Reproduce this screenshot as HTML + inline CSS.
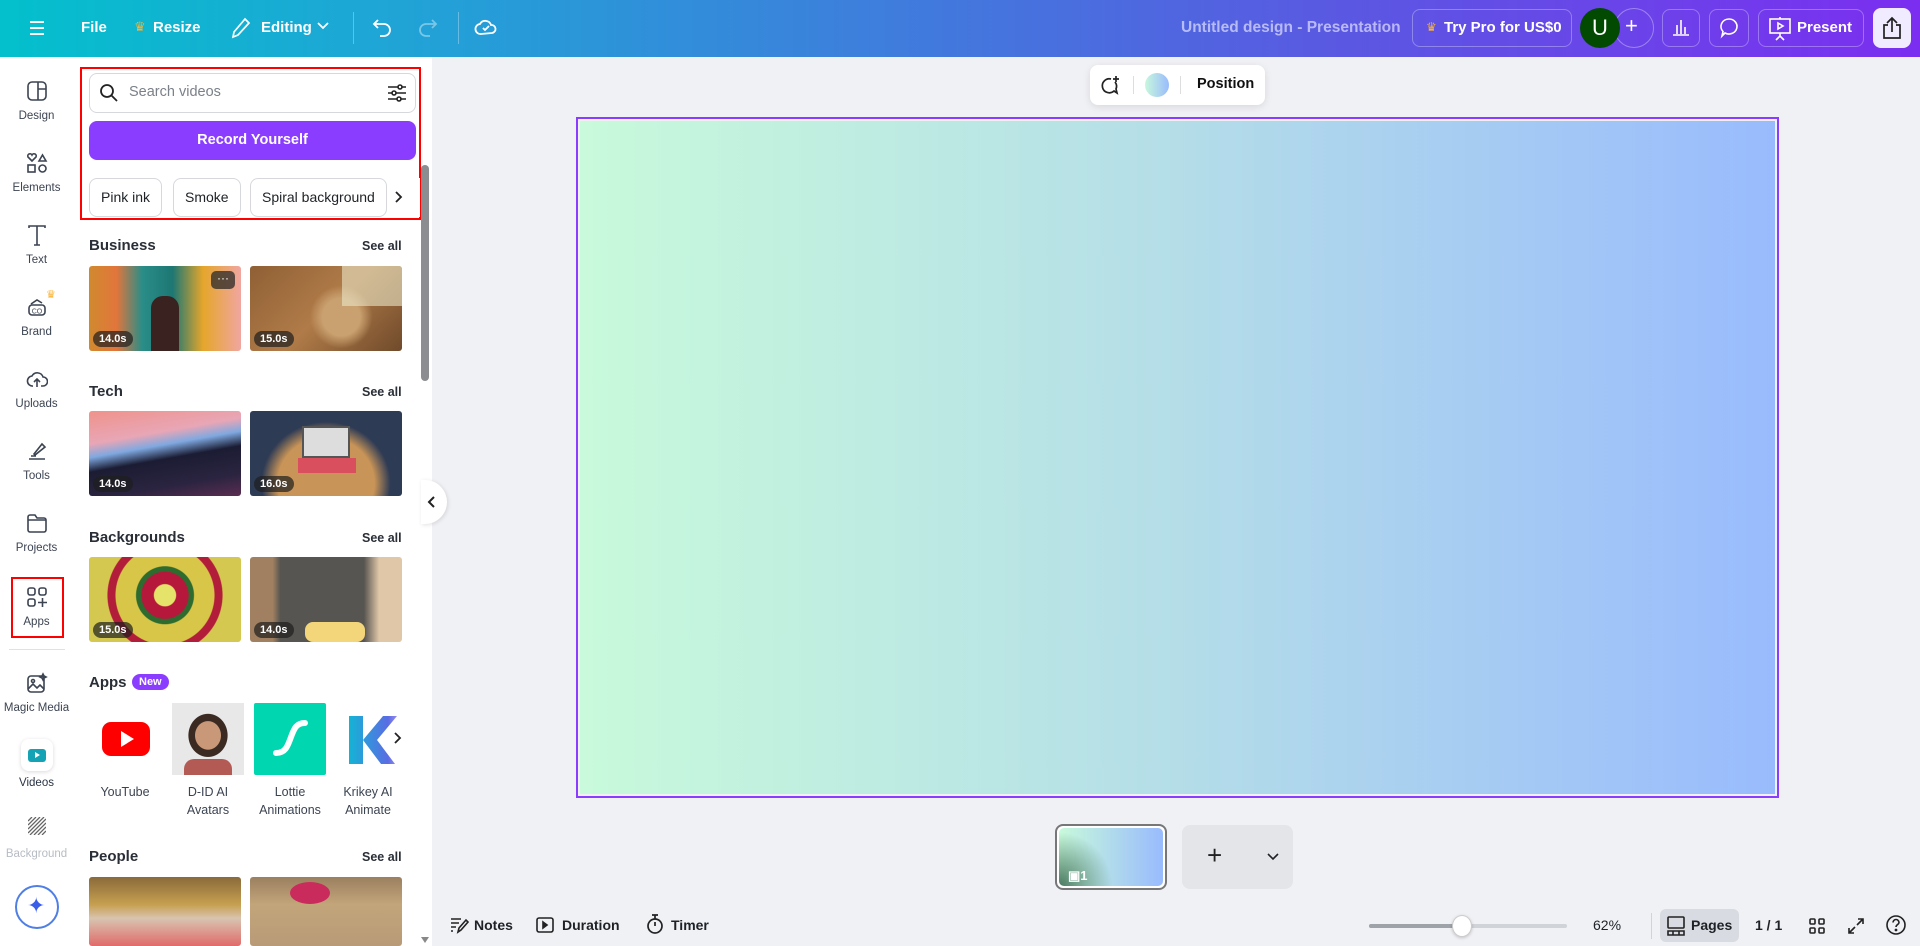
<!DOCTYPE html>
<html><head><meta charset="utf-8"><style>
*{box-sizing:border-box;margin:0;padding:0}
body{width:1920px;height:946px;overflow:hidden;font-family:"Liberation Sans",sans-serif;background:#f0f1f5;position:relative;color:#0d1216}
.a{position:absolute}
.hdr{left:0;top:0;width:1920px;height:57px;background:linear-gradient(90deg,#03c0cc 0%,#1fa5d6 20%,#3d7fdc 45%,#5a58e2 70%,#7b2ef0 100%)}
.ht{color:#fff;font-weight:bold;font-size:15px;top:19px}
.hb{border:1px solid rgba(255,255,255,.3);border-radius:8px;height:38px;top:9px}
.rail{left:0;top:57px;width:73px;height:889px;background:#fff}
.ri{width:73px;text-align:center;font-size:11.5px;color:#3c4452}
.ri svg{display:block;margin:0 auto 8px}
.panel{left:73px;top:57px;width:359px;height:889px;background:#fff}
.h3{font-weight:bold;font-size:15px;color:#2a2f37}
.sa{font-size:12.5px;font-weight:bold;color:#2a2f37}
.th{width:152px;height:85px;border-radius:3px;overflow:hidden}
.dur{position:absolute;left:4px;bottom:4px;background:rgba(30,30,30,.7);color:#fff;font-size:11px;font-weight:bold;padding:2px 6px;border-radius:9px}
.chip{top:178px;height:39px;border:1px solid #d6d8dc;border-radius:8px;font-size:14px;line-height:37px;padding:0 11px;color:#202428;background:#fff}
.al{font-size:12.5px;color:#3c4452;text-align:center;width:80px;line-height:18px}
.bt{top:917px;font-size:14px;font-weight:bold;color:#1e2226}
</style></head><body>
<div class="a hdr"></div>
<svg class="a" style="left:28px;top:19px" width="18" height="18" viewBox="0 0 18 18" stroke="#fff" stroke-width="2"><path d="M2 3h14M2 9h14M2 15h14"/></svg>
<div class="a ht" style="left:81px">File</div>
<div class="a" style="left:134px;top:19px;color:#f9b233;font-size:13px">♛</div>
<div class="a ht" style="left:153px">Resize</div>
<svg class="a" style="left:231px;top:17px" width="20" height="22" viewBox="0 0 20 22" fill="none" stroke="#fff" stroke-width="1.7"><path d="M14 2l4 4L7 18l-5 2 1-5z"/></svg>
<div class="a ht" style="left:261px">Editing</div>
<svg class="a" style="left:317px;top:22px" width="12" height="8" viewBox="0 0 12 8" fill="none" stroke="#fff" stroke-width="1.7"><path d="M1 1l5 5 5-5"/></svg>
<div class="a" style="left:353px;top:12px;width:1px;height:32px;background:rgba(255,255,255,.3)"></div>
<svg class="a" style="left:372px;top:17px" width="22" height="22" viewBox="0 0 22 22" fill="none" stroke="#fff" stroke-width="1.8"><path d="M6 3L2 7l4 4M2 7h10a6 6 0 010 12H8"/></svg>
<svg class="a" style="left:416px;top:17px" width="22" height="22" viewBox="0 0 22 22" fill="none" stroke="rgba(255,255,255,.4)" stroke-width="1.8"><path d="M16 3l4 4-4 4M20 7H10a6 6 0 000 12h4"/></svg>
<div class="a" style="left:458px;top:12px;width:1px;height:32px;background:rgba(255,255,255,.3)"></div>
<svg class="a" style="left:474px;top:15px" width="24" height="24" viewBox="0 0 24 24" fill="none" stroke="#fff" stroke-width="1.8"><path d="M7 19a5 5 0 01-1-10 6 6 0 0111 1 4 4 0 011 8z"/><path d="M9 13l2 2 4-4"/></svg>
<div class="a" style="left:1181px;top:19px;color:rgba(225,225,255,.7);font-size:15.5px;font-weight:bold">Untitled design - Presentation</div>
<div class="a hb" style="left:1412px;width:160px"></div>
<div class="a" style="left:1426px;top:20px;color:#f9b233;font-size:12px">♛</div>
<div class="a ht" style="left:1444px">Try Pro for US$0</div>
<div class="a" style="left:1614px;top:8px;width:40px;height:40px;border-radius:50%;border:1px solid rgba(255,255,255,.35)"></div>
<div class="a" style="left:1625px;top:13px;color:#fff;font-size:22px">+</div>
<div class="a" style="left:1580px;top:8px;width:40px;height:40px;border-radius:50%;background:#024902;color:#fff;font-size:22px;text-align:center;line-height:40px">U</div>
<div class="a hb" style="left:1662px;width:38px"></div>
<svg class="a" style="left:1671px;top:17px" width="20" height="20" viewBox="0 0 20 20" stroke="#fff" stroke-width="1.6"><path d="M2 18h16M6 17V8M10 17V3M14 17V10"/></svg>
<div class="a hb" style="left:1709px;width:40px"></div>
<svg class="a" style="left:1718px;top:16px" width="22" height="24" viewBox="0 0 22 24" fill="none" stroke="#fff" stroke-width="1.6"><path d="M11 3a8 7.5 0 11-4 14l-3 3 1-4.5A8 7.5 0 0111 3z"/></svg>
<div class="a hb" style="left:1758px;width:106px"></div>
<svg class="a" style="left:1768px;top:16px" width="24" height="26" viewBox="0 0 24 26" fill="none" stroke="#fff" stroke-width="1.6"><rect x="2" y="3" width="20" height="14"/><path d="M10 7l5 3-5 3zM12 17v3M8 24l4-4 4 4M12 1v2"/></svg>
<div class="a ht" style="left:1797px">Present</div>
<div class="a" style="left:1873px;top:8px;width:38px;height:40px;border-radius:8px;background:#f1ebff"></div>
<svg class="a" style="left:1881px;top:16px" width="22" height="24" viewBox="0 0 22 24" fill="none" stroke="#222" stroke-width="1.7"><path d="M7 9H3v13h16V9h-4M11 16V2M6 7l5-5 5 5"/></svg>

<div class="a rail"></div>
<div class="a ri" style="left:0;top:80px"><svg width="22" height="22" viewBox="0 0 22 22" fill="none" stroke="#3c4452" stroke-width="1.6"><rect x="2" y="2" width="18" height="18" rx="4"/><path d="M12 2v18M12 9h8"/></svg>Design</div>
<div class="a ri" style="left:0;top:152px"><svg width="22" height="22" viewBox="0 0 22 22" fill="none" stroke="#3c4452" stroke-width="1.6"><path d="M6 9l-4-4a2 2 0 014-2 2 2 0 014 2zM13 9l3.5-6 3.5 6z"/><rect x="2" y="13" width="7" height="7"/><circle cx="16.5" cy="16.5" r="3.5"/></svg>Elements</div>
<div class="a ri" style="left:0;top:224px"><svg width="22" height="22" viewBox="0 0 22 22" fill="none" stroke="#3c4452" stroke-width="1.6"><path d="M3 4V2h16v2M11 2v19M8 21h6"/></svg>Text</div>
<div class="a" style="left:46px;top:288px;color:#f9b233;font-size:11px">♛</div>
<div class="a ri" style="left:0;top:296px"><svg width="22" height="22" viewBox="0 0 22 22" fill="none" stroke="#3c4452" stroke-width="1.6"><rect x="3" y="9" width="16" height="10" rx="3"/><path d="M5 8l6-4 5 3"/><text x="11" y="17.5" font-size="7" text-anchor="middle" fill="#3c4452" stroke="none" font-family="Liberation Sans">CO</text></svg>Brand</div>
<div class="a ri" style="left:0;top:368px"><svg width="22" height="22" viewBox="0 0 22 22" fill="none" stroke="#3c4452" stroke-width="1.6"><path d="M7 18a5 5 0 01-1-10 6 6 0 0111 1 4 4 0 010 9h-2M11 19v-8M8 14l3-3 3 3"/></svg>Uploads</div>
<div class="a ri" style="left:0;top:440px"><svg width="22" height="22" viewBox="0 0 22 22" fill="none" stroke="#3c4452" stroke-width="1.6"><path d="M8 14l8-10 3 3-10 8zM3 19h16M5 16h5"/></svg>Tools</div>
<div class="a ri" style="left:0;top:512px"><svg width="22" height="22" viewBox="0 0 22 22" fill="none" stroke="#3c4452" stroke-width="1.6"><path d="M2 5a2 2 0 012-2h5l2 3h7a2 2 0 012 2v10a2 2 0 01-2 2H4a2 2 0 01-2-2zM2 8h18"/></svg>Projects</div>
<div class="a" style="left:11px;top:577px;width:53px;height:61px;border:2px solid #f00"></div>
<div class="a ri" style="left:0;top:586px"><svg width="22" height="22" viewBox="0 0 22 22" fill="none" stroke="#3c4452" stroke-width="1.6"><rect x="2" y="2" width="7" height="7" rx="2"/><rect x="13" y="2" width="7" height="7" rx="2"/><rect x="2" y="13" width="7" height="7" rx="2"/><path d="M16.5 12v9M12 16.5h9"/></svg>Apps</div>
<div class="a" style="left:9px;top:649px;width:56px;height:1px;background:#dfe1e5"></div>
<div class="a ri" style="left:0;top:672px"><svg width="22" height="22" viewBox="0 0 22 22" fill="none" stroke="#3c4452" stroke-width="1.6"><rect x="2" y="4" width="16" height="16" rx="3"/><circle cx="7" cy="9" r="1.5"/><path d="M2 17l5-5 4 4 3-3 4 4M17 2l1 2 2 1-2 1-1 2-1-2-2-1 2-1z"/></svg>Magic Media</div>
<div class="a" style="left:21px;top:739px;width:32px;height:32px;border-radius:8px;background:#fff;box-shadow:0 1px 4px rgba(0,0,0,.15)"></div>
<div class="a" style="left:28px;top:749px;width:18px;height:13px;border-radius:3px;background:#13a3b5"></div>
<div class="a" style="left:35px;top:752px;width:0;height:0;border-left:5px solid #fff;border-top:3.5px solid transparent;border-bottom:3.5px solid transparent"></div>
<div class="a ri" style="left:0;top:777px;color:#2a3444">Videos</div>
<svg class="a" style="left:28px;top:817px" width="18" height="18" viewBox="0 0 18 18" stroke="#666" stroke-width="1.3"><path d="M0 4L4 0M0 8L8 0M0 12L12 0M0 16L16 0M2 18L18 2M6 18L18 6M10 18L18 10M14 18L18 14"/></svg>
<div class="a ri" style="left:0;top:848px;color:#b7bcc4">Background</div>
<div class="a" style="left:15px;top:885px;width:44px;height:44px;border-radius:50%;border:2px solid #4f7fe5;background:#fff"></div>
<div class="a" style="left:27px;top:893px;color:#3b5ee8;font-size:22px">✦</div>

<div class="a panel"></div>
<div class="a" style="left:80px;top:67px;width:341px;height:153px;border:2.5px solid #f00"></div>
<div class="a" style="left:89px;top:73px;width:327px;height:40px;border:1px solid #d6d8dc;border-radius:8px;background:#fff"></div>
<svg class="a" style="left:99px;top:83px" width="20" height="20" viewBox="0 0 20 20" fill="none" stroke="#222" stroke-width="1.8"><circle cx="8" cy="8" r="6"/><path d="M12.5 12.5L18 18"/></svg>
<div class="a" style="left:129px;top:84px;font-size:14.5px;color:#7b8189">Search videos</div>
<svg class="a" style="left:387px;top:83px" width="20" height="20" viewBox="0 0 20 20" fill="none" stroke="#222" stroke-width="1.6"><path d="M1 4h18M1 10h18M1 16h18"/><circle cx="13" cy="4" r="2" fill="#fff"/><circle cx="7" cy="10" r="2" fill="#fff"/><circle cx="12" cy="16" r="2" fill="#fff"/></svg>
<div class="a" style="left:89px;top:121px;width:327px;height:39px;border-radius:8px;background:#8b3dff;color:#fff;font-weight:bold;font-size:14.5px;text-align:center;line-height:39px">Record Yourself</div>
<div class="a chip" style="left:89px">Pink ink</div>
<div class="a chip" style="left:173px">Smoke</div>
<div class="a chip" style="left:250px">Spiral background</div>
<div class="a" style="left:392px;top:178px;width:28px;height:39px;background:#fff"></div>
<svg class="a" style="left:393px;top:190px" width="10" height="14" viewBox="0 0 10 14" fill="none" stroke="#222" stroke-width="1.8"><path d="M3 2l5 5-5 5"/></svg>
<div class="a" style="left:421px;top:165px;width:8px;height:216px;background:#8b8d91;border-radius:4px"></div>
<div class="a" style="left:421px;top:168px;width:0;height:0"></div>

<div class="a h3" style="left:89px;top:237px">Business</div><div class="a sa" style="left:362px;top:239px">See all</div>
<div class="a th" style="left:89px;top:266px;background:linear-gradient(90deg,#d08a2e 0%,#e2753c 18%,#2a8d88 35%,#1d7773 55%,#e5a62b 75%,#f0a6a0 100%)"><div class="a" style="left:62px;top:30px;width:28px;height:55px;background:#3a2220;border-radius:12px 12px 0 0"></div><div class="a" style="right:6px;top:5px;width:24px;height:18px;border-radius:5px;background:rgba(40,40,40,.75);color:#fff;font-size:12px;text-align:center;line-height:14px">···</div><div class="dur">14.0s</div></div>
<div class="a th" style="left:250px;top:266px;background:radial-gradient(circle at 60% 60%,#c9a06f 0 18%,transparent 30%),linear-gradient(135deg,#8f6035,#b07b48 50%,#6f4a2b)"><div class="a" style="right:0;top:0;width:60px;height:40px;background:#e9e6c8;opacity:.6"></div><div class="dur">15.0s</div></div>

<div class="a h3" style="left:89px;top:383px">Tech</div><div class="a sa" style="left:362px;top:385px">See all</div>
<div class="a th" style="left:89px;top:411px;background:linear-gradient(170deg,#f0928a 0%,#e8a6b6 30%,#7fa8e0 42%,#1b1c33 55%,#2b2440 80%,#5a2d52)"><div class="dur">14.0s</div></div>
<div class="a th" style="left:250px;top:411px;background:radial-gradient(ellipse at 50% 85%,#c99457 0 45%,#2e3b55 60%)"><div class="a" style="left:52px;top:15px;width:48px;height:32px;background:#ddd;border:2px solid #555"></div><div class="a" style="left:48px;top:47px;width:58px;height:15px;background:#d94f5d"></div><div class="dur">16.0s</div></div>

<div class="a h3" style="left:89px;top:529px">Backgrounds</div><div class="a sa" style="left:362px;top:531px">See all</div>
<div class="a th" style="left:89px;top:557px;background:radial-gradient(circle at 50% 45%,#e5e36a 0 12%,#b5183a 13% 26%,#2e6b2e 27% 32%,#d8c648 33% 55%,#b21d39 56% 64%,#d4c850 65%)"><div class="dur">15.0s</div></div>
<div class="a th" style="left:250px;top:557px;background:linear-gradient(90deg,#a08060 0 15%,#575551 20% 75%,#e0c7a8 85%)"><div class="a" style="left:55px;top:65px;width:60px;height:20px;background:#f3d57a;border-radius:8px"></div><div class="dur">14.0s</div></div>

<div class="a h3" style="left:89px;top:674px">Apps</div>
<div class="a" style="left:132px;top:674px;background:#8b3dff;color:#fff;font-size:11px;font-weight:bold;border-radius:9px;padding:2px 7px">New</div>
<div class="a" style="left:89px;top:703px;width:72px;height:72px;background:#fff"></div>
<div class="a" style="left:102px;top:722px;width:48px;height:34px;border-radius:9px;background:#f00"></div>
<div class="a" style="left:121px;top:731px;width:0;height:0;border-left:13px solid #fff;border-top:8px solid transparent;border-bottom:8px solid transparent"></div>
<div class="a" style="left:172px;top:703px;width:72px;height:72px;background:radial-gradient(ellipse at 50% 45%,#c99878 0 25%,#3a2a22 26% 38%,#e8e8e8 39%)"><div class="a" style="left:12px;top:56px;width:48px;height:16px;background:#b45a55;border-radius:10px 10px 0 0"></div></div>
<div class="a" style="left:254px;top:703px;width:72px;height:72px;background:#00d6b0;border-radius:2px"></div>
<svg class="a" style="left:264px;top:713px" width="52" height="52" viewBox="0 0 52 52" fill="none" stroke="#fff" stroke-width="6" stroke-linecap="round"><path d="M12 40c10 0 12-8 15-16s5-14 14-14"/></svg>
<svg class="a" style="left:337px;top:712px" width="60" height="56" viewBox="0 0 60 56"><defs><linearGradient id="k" x1="0" x2="1"><stop offset="0" stop-color="#14b4d6"/><stop offset="1" stop-color="#6a5ce6"/></linearGradient></defs><path d="M12 4h14v48H12zM26 28L46 4h14L40 28l18 24H44z" fill="url(#k)"/></svg>
<div class="a" style="left:388px;top:712px;width:30px;height:56px;background:linear-gradient(90deg,rgba(255,255,255,0),#fff)"></div>
<svg class="a" style="left:392px;top:731px" width="10" height="14" viewBox="0 0 10 14" fill="none" stroke="#222" stroke-width="1.8"><path d="M3 2l5 5-5 5"/></svg>
<div class="a al" style="left:85px;top:783px">YouTube</div>
<div class="a al" style="left:168px;top:783px">D-ID AI<br>Avatars</div>
<div class="a al" style="left:250px;top:783px">Lottie<br>Animations</div>
<div class="a al" style="left:333px;top:783px;width:70px;overflow:hidden;white-space:nowrap">Krikey AI<br>Animate</div>

<div class="a h3" style="left:89px;top:848px">People</div><div class="a sa" style="left:362px;top:850px">See all</div>
<div class="a th" style="left:89px;top:877px;height:69px;background:linear-gradient(180deg,#8a6a3a 0,#c6a050 40%,#d8c4b0 60%,#e06a6a 100%)"></div>
<div class="a th" style="left:250px;top:877px;height:69px;background:linear-gradient(180deg,#9b8060,#c3a57a 40%,#b89a78)"><div class="a" style="left:40px;top:5px;width:40px;height:22px;background:#c92b5d;border-radius:50%"></div></div>
<div class="a" style="left:421px;top:937px;width:0;height:0;border-top:6px solid #888;border-left:4px solid transparent;border-right:4px solid transparent"></div>

<div class="a" style="left:421px;top:480px;width:26px;height:44px;background:#fff;border-radius:0 22px 22px 0;box-shadow:1px 1px 4px rgba(0,0,0,.12)"></div>
<svg class="a" style="left:427px;top:496px" width="10" height="12" viewBox="0 0 10 12" fill="none" stroke="#222" stroke-width="2"><path d="M7 1L2 6l5 5"/></svg>

<div class="a" style="left:1090px;top:65px;width:175px;height:40px;background:#fff;border-radius:8px;box-shadow:0 2px 8px rgba(0,0,0,.1)"></div>
<svg class="a" style="left:1098px;top:74px" width="24" height="24" viewBox="0 0 24 24" fill="none" stroke="#222" stroke-width="1.7"><path d="M13 5a7 7 0 103 12l3 2-1-4a7 7 0 00-1-7M18 2v6M15 5h6"/></svg>
<div class="a" style="left:1133px;top:76px;width:1px;height:18px;background:#ddd"></div>
<div class="a" style="left:1145px;top:73px;width:24px;height:24px;border-radius:50%;background:linear-gradient(90deg,#c8f8dc,#99bbfd)"></div>
<div class="a" style="left:1180px;top:76px;width:1px;height:18px;background:#ddd"></div>
<div class="a" style="left:1197px;top:76px;font-size:14.5px;font-weight:bold;color:#111">Position</div>

<div class="a" style="left:576px;top:117px;width:1203px;height:681px;border:2px solid #8b3dff"></div>
<div class="a" style="left:580px;top:121px;width:1195px;height:673px;background:linear-gradient(90deg,#c8fadb 0%,#b4dde8 50%,#99bbfd 100%)"></div>

<div class="a" style="left:1055px;top:824px;width:112px;height:66px;border:2px solid #777;border-radius:8px;background:#fff"></div>
<div class="a" style="left:1059px;top:828px;width:104px;height:58px;border-radius:5px;background:radial-gradient(circle at 0% 100%,#4a7a60 0,rgba(74,122,96,0) 45%),linear-gradient(90deg,#c8fadb,#99bbfd)"></div>
<div class="a" style="left:1068px;top:868px;color:#fff;font-size:13px;font-weight:bold">▣1</div>
<div class="a" style="left:1182px;top:825px;width:111px;height:64px;border-radius:8px;background:#e3e5e9"></div>
<div class="a" style="left:1207px;top:842px;font-size:26px;color:#222;line-height:26px">+</div>
<svg class="a" style="left:1267px;top:853px" width="12" height="8" viewBox="0 0 12 8" fill="none" stroke="#222" stroke-width="1.6"><path d="M1 1l5 5 5-5"/></svg>

<svg class="a" style="left:449px;top:915px" width="20" height="20" viewBox="0 0 20 20" fill="none" stroke="#222" stroke-width="1.6"><path d="M2 4h10M2 8h8M2 12h5M2 16h2M9 17l1-4 7-8 2 2-7 8z"/></svg>
<div class="a bt" style="left:474px">Notes</div>
<svg class="a" style="left:535px;top:915px" width="20" height="20" viewBox="0 0 20 20" fill="none" stroke="#222" stroke-width="1.6"><rect x="2" y="3" width="16" height="14" rx="2"/><path d="M8 7l4 3-4 3z" fill="#222"/></svg>
<div class="a bt" style="left:562px">Duration</div>
<svg class="a" style="left:645px;top:913px" width="20" height="22" viewBox="0 0 20 22" fill="none" stroke="#222" stroke-width="1.7"><circle cx="10" cy="13" r="7"/><path d="M10 13V9M7 2h6M10 2v4"/></svg>
<div class="a bt" style="left:671px">Timer</div>
<div class="a" style="left:1369px;top:924px;width:198px;height:4px;border-radius:2px;background:#d0d3d8"></div>
<div class="a" style="left:1369px;top:924px;width:93px;height:4px;border-radius:2px;background:#9ea3aa"></div>
<div class="a" style="left:1452px;top:915px;width:20px;height:22px;border-radius:50%;background:#fff;border:1px solid #ccc;box-shadow:0 1px 3px rgba(0,0,0,.2)"></div>
<div class="a" style="left:1593px;top:917px;font-size:14px;color:#1e2226">62%</div>
<div class="a" style="left:1651px;top:913px;width:1px;height:26px;background:#d0d3d8"></div>
<div class="a" style="left:1660px;top:909px;width:79px;height:33px;border-radius:6px;background:#d8dbe1"></div>
<svg class="a" style="left:1666px;top:915px" width="20" height="22" viewBox="0 0 20 22" fill="none" stroke="#222" stroke-width="1.6"><rect x="2" y="2" width="16" height="11" rx="1"/><path d="M2 16h16v4H2zM7 16v4M13 16v4"/></svg>
<div class="a bt" style="left:1691px">Pages</div>
<div class="a" style="left:1755px;top:917px;font-size:14px;font-weight:bold;color:#1e2226">1 / 1</div>
<svg class="a" style="left:1808px;top:917px" width="18" height="18" viewBox="0 0 18 18" fill="none" stroke="#222" stroke-width="1.6"><rect x="2" y="2" width="5" height="5" rx="1"/><rect x="11" y="2" width="5" height="5" rx="1"/><rect x="2" y="11" width="5" height="5" rx="1"/><rect x="11" y="11" width="5" height="5" rx="1"/></svg>
<svg class="a" style="left:1847px;top:917px" width="18" height="18" viewBox="0 0 18 18" fill="none" stroke="#222" stroke-width="1.6"><path d="M11 2h5v5M16 2l-6 6M7 16H2v-5M2 16l6-6"/></svg>
<svg class="a" style="left:1885px;top:914px" width="22" height="22" viewBox="0 0 22 22" fill="none" stroke="#222" stroke-width="1.6"><circle cx="11" cy="11" r="9"/><path d="M8 8.5a3 3 0 116 0c0 2-3 2-3 4.5"/><circle cx="11" cy="16" r=".6" fill="#222"/></svg>
</body></html>
